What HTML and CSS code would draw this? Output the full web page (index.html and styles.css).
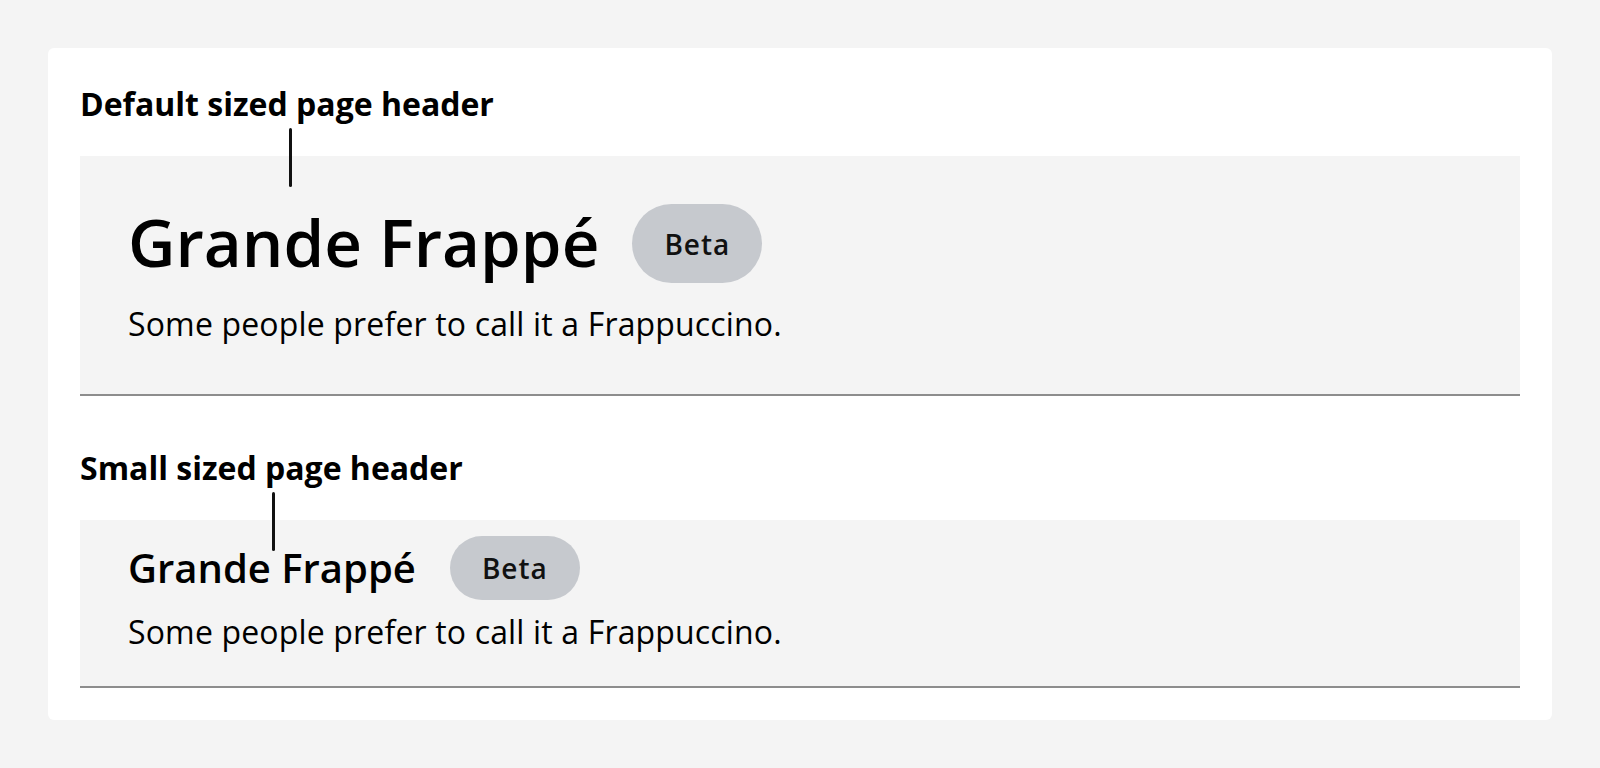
FILE: index.html
```html
<!DOCTYPE html>
<html lang="en">
<head>
<meta charset="utf-8">
<title>Page header sizes</title>
<link rel="stylesheet" href="styles.css">
</head>
<body>
  <main class="card">
    <section class="example example--default">
      <h2 class="example__label">Default sized page header</h2>
      <span class="connector connector--default" aria-hidden="true"></span>
      <header class="page-header page-header--default">
        <div class="page-header__row">
          <h1 class="page-header__title">Grande Frappé</h1>
          <span class="tag tag--default">Beta</span>
        </div>
        <p class="page-header__subtitle">Some people prefer to call it a Frappuccino.</p>
      </header>
    </section>

    <section class="example example--small">
      <h2 class="example__label">Small sized page header</h2>
      <span class="connector connector--small" aria-hidden="true"></span>
      <header class="page-header page-header--small">
        <div class="page-header__row">
          <h1 class="page-header__title">Grande Frappé</h1>
          <span class="tag tag--small">Beta</span>
        </div>
        <p class="page-header__subtitle">Some people prefer to call it a Frappuccino.</p>
      </header>
    </section>
  </main>
</body>
</html>
```

FILE: styles.css
```css
* {
  box-sizing: border-box;
}

html,
body {
  margin: 0;
  background: #f4f4f4;
}

body {
  padding: 48px;
  font-family: "Open Sans", "Noto Sans", sans-serif;
  color: #000;
}

.card {
  background: #ffffff;
  border-radius: 6px;
  padding: 34px 32px 32px;
  display: flex;
  flex-direction: column;
  gap: 50px;
}

.example {
  position: relative;
  display: flex;
  flex-direction: column;
  gap: 30px;
}

.example__label {
  margin: 0;
  font-size: 32px;
  line-height: 44px;
  font-weight: 700;
  color: #000;
}

.connector {
  position: absolute;
  width: 3px;
  height: 59px;
  top: 46px;
  background: #111;
  border-radius: 2px;
}

.connector--default {
  left: 209px;
}

.connector--small {
  left: 192px;
}

.page-header {
  background: #f4f4f4;
  border-bottom: 2px solid #8d8d8d;
  display: flex;
  flex-direction: column;
}

.page-header--default {
  padding: 48px 48px 48px;
  gap: 19px;
}

.page-header--small {
  padding: 16px 48px 32px;
  gap: 10px;
}

.page-header__row {
  display: flex;
  align-items: center;
  gap: 34px;
}

.page-header__title {
  margin: 0;
  color: #000;
}

.page-header--default .page-header__title {
  font-size: 65.5px;
  line-height: 72px;
  font-weight: 600;
  margin-bottom: 3px;
}

.page-header--default .page-header__row {
  gap: 33px;
}

.page-header--small .page-header__title {
  font-size: 40px;
  line-height: 56px;
  font-weight: 600;
}

.page-header__subtitle {
  margin: 0;
  font-size: 32px;
  line-height: 44px;
  font-weight: 400;
  letter-spacing: 0.16px;
  color: #000;
}

.tag {
  display: inline-flex;
  align-items: center;
  justify-content: center;
  padding: 0 32px;
  background: #c6c9ce;
  border-radius: 40px;
  font-size: 28px;
  font-weight: 600;
  letter-spacing: 1px;
  color: #111;
  white-space: nowrap;
}

.tag--default {
  height: 79px;
}

.tag--small {
  height: 64px;
}
```
